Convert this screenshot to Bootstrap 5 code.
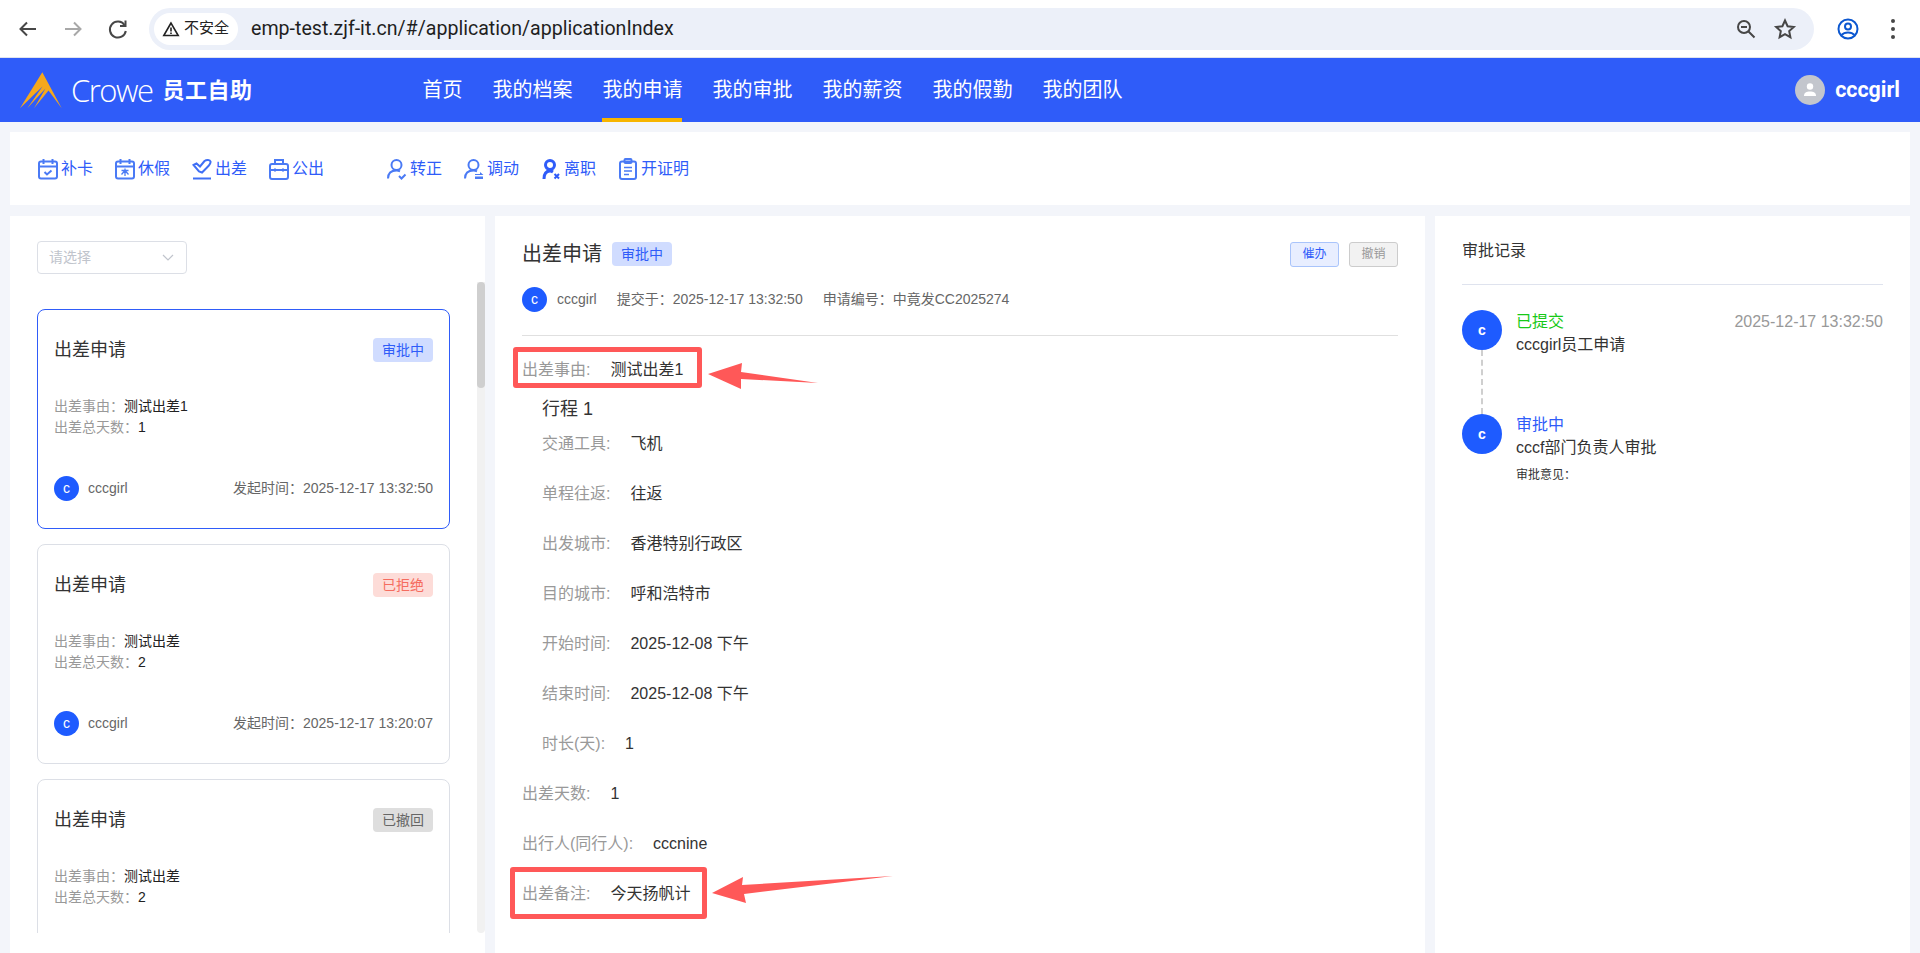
<!doctype html>
<html lang="zh-CN"><head><meta charset="utf-8"><title>员工自助</title>
<link href="https://cdn.jsdelivr.net/npm/bootstrap@5.3.0/dist/css/bootstrap.min.css" rel="stylesheet">
<style>
html,body{height:953px;overflow:hidden}
body{background:#f3f5fa;font-family:"Liberation Sans","Noto Sans CJK SC",sans-serif;color:#333;position:relative}
.chromebar{height:58px;background:#fff;padding:0 0 0 14px;border-bottom:1px solid #dfe3ee}
.cicon{width:28px;height:28px;flex:none}
.cicons{gap:17px;margin-right:17px}
.omni{height:42px;width:1665px;background:#ecf0f9;border-radius:21px;padding:0 15px 0 5px}
.chip{height:32px;width:84px;background:#fff;border-radius:16px;font-size:15px;color:#222;gap:4px;padding-left:8px;white-space:nowrap}
.urltext{font-family:Roboto,sans-serif;font-size:19.6px;color:#1f1f1f;margin-left:13px}
.endicons{gap:11px}
.profileicons{gap:27px;margin-left:20px}
.topnav{height:64px;background:#2f5cf9;padding:0 20px;color:#fff}
.brandword{font-family:"Open Sans",sans-serif;font-size:31px;letter-spacing:-1.5px;font-weight:300;margin:0 10px 0 9px}
.brandcn{font-size:22px;font-weight:700;letter-spacing:.5px}
.menuwrap{gap:30px;margin-left:170px;height:64px}
.menuitem{font-size:20px;line-height:64px;color:#fff;text-decoration:none;height:64px;display:block}
.menuitem.on{border-bottom:4px solid #f7b500}
.useravatar{width:30px;height:30px;border-radius:50%;background:#c3c6cd;margin-right:10px}
.username{font-family:Roboto,sans-serif;font-size:21.4px;font-weight:700}
.toolbar{height:73px;margin:10px 10px 11px;background:#fff;padding:0 28px}
.tool{font-size:16px;color:#2f5cf9;gap:3px;line-height:22px;text-decoration:none}
.toolgroup{gap:22px}
.toolgroup+.toolgroup{margin-left:63px}
.tool svg{width:20px;height:22px;flex:none}
.panels{gap:10px;padding:0 10px;height:737px}
.panel{background:#fff;height:737px}
.panel-left{width:475px;position:relative}
.fake-select{width:150px;height:33px;border:1px solid #dcdfe6;border-radius:4px;font-size:14px;color:#c0c4cc;padding:0 12px 0 11px;margin:25px 0 8px 27px}
.listscroll{height:651px;overflow:hidden;display:flex;justify-content:space-between;padding-left:27px}
.cards{width:413px;margin-top:27px}
.apcard{height:220px;border:1px solid #dcdfe6;border-radius:8px;padding:28px 16px 0;margin-bottom:15px}
.apcard.sel{border-color:#2f5cf9}
.ctitle{font-size:18px;color:#333;line-height:24px}
.state{font-size:14px;width:60px;height:24px;border-radius:4px;line-height:24px;text-align:center}
.st-blue{background:#d0dcff;color:#2f5cf9}
.st-red{background:#fddcd8;color:#f56c5f}
.st-gray{background:#dedede;color:#666}
.cfields{font-size:14px;line-height:21px;margin-top:34px;height:80px;color:#222}
.lab{color:#999}
.cfoot{font-size:14px;color:#666}
.dot{width:25px;height:25px;border-radius:50%;background:#1e5bff;color:#fff;font-size:14px;line-height:25px;text-align:center;flex:none}
.dotname{margin-left:9px}
.track{width:8px;background:#f1f1f1;height:651px;border-radius:0 0 4px 4px}
.thumb{height:106px;width:8px;background:#cfcfcf;border-radius:4px}
.panel-mid{width:930px;padding:25px 27px 0 27px}
.mtitle{font-size:20px;line-height:26px;color:#333}
.mtitle .state{margin-left:10px}
.mini{width:49px;height:25px;border-radius:3px;font-size:12px;line-height:23px;text-align:center}
.mini-a{background:#e8eeff;border:1px solid #a9c4fb;color:#2f5cf9}
.mini-b{background:#f2f2f2;border:1px solid #ccc;color:#999;margin-left:10px}
.msub{font-size:14px;color:#666;margin-top:20px;padding-bottom:23px;border-bottom:1px solid #e0e0e0}
.msub .dot{margin-right:10px}
.msub .gapl{margin-left:20px}
.frow{font-size:16px;height:50px;line-height:50px;color:#333;white-space:nowrap}
.frow .lab{margin-right:20px}
.frow.first{margin-top:9px;height:50px}
.trip{padding-left:20px}
.triptitle{font-size:18px;line-height:26px;margin-top:1px;height:23px;color:#333}
.panel-right{width:475px;padding:0 27px}
.rtitle{font-size:16px;line-height:20px;padding:25px 0 23px;border-bottom:1px solid #dfe3ee;color:#333}
.tl{margin-top:25px;position:relative}
.tlitem{height:104px}
.tlavatar{width:40px;height:40px;border-radius:50%;background:#1e5bff;color:#fff;font-size:14px;font-weight:700;line-height:40px;text-align:center;flex:none;margin-right:14px}
.tlbody{font-size:16px;line-height:23px;color:#333}
.tlbody.lift{margin-top:-1px}
.tlhead{display:flex;justify-content:space-between}
.tdate{color:#999;font-size:16px}
.tstatus-g{color:#17c917}
.tstatus-b{color:#2f5cf9}
.opinion{font-size:12px;line-height:16px;margin-top:8px;color:#333}
.tlline{position:absolute;left:19px;top:40px;height:64px;width:0;border-left:2px dashed #cfcfcf}
.redbox{position:absolute;border:5px solid #ff5858;border-radius:3px}
.rb1{left:513px;top:347px;width:189px;height:41px}
.rb2{left:510px;top:867px;width:197px;height:52px}
.arrows{position:absolute;left:0;top:0;width:1920px;height:953px;pointer-events:none}
</style></head>
<body>
<div class="chromebar d-flex align-items-center">
  <div class="d-flex align-items-center cicons">
    <svg class="cicon" viewBox="0 0 28 28" fill="none" stroke="#474747" stroke-width="2"><path d="M22 14H7M13 7.500L6.500 14l6.500 6.500"/></svg>
    <svg class="cicon" viewBox="0 0 28 28" fill="none" stroke="#a8a8a8" stroke-width="2"><path d="M6 14h15M15 7.500l6.500 6.500-6.500 6.500"/></svg>
    <svg class="cicon" viewBox="0 0 28 28" fill="none" stroke="#474747" stroke-width="2"><path d="M20.500 10a8 8 0 1 0 1.300 6"/><path d="M21.500 5.500v5.500h-5.500"/></svg>
  </div>
  <div class="omni d-flex align-items-center justify-content-between">
    <div class="d-flex align-items-center">
      <div class="chip d-flex align-items-center"><svg width="18" height="16" viewBox="0 0 18 16" fill="none" stroke="#222" stroke-width="1.600"><path d="M9 2L1.800 14.500h14.400z"/><path d="M9 6.500v4M9 11.500v1.500"/></svg><span>不安全</span></div>
      <span class="urltext">emp-test.zjf-it.cn/#/application/applicationIndex</span>
    </div>
    <div class="d-flex align-items-center endicons">
      <svg class="cicon" viewBox="0 0 28 28" fill="none" stroke="#474747" stroke-width="2"><circle cx="12" cy="12" r="6"/><path d="M9 12h6M16.500 16.500l6 6"/></svg>
      <svg class="cicon" viewBox="0 0 28 28" fill="none" stroke="#474747" stroke-width="2"><path d="M14 5.500l2.600 5.700 6.200.7-4.600 4.200 1.200 6.100-5.400-3.100-5.400 3.100 1.200-6.100-4.600-4.200 6.200-.7z"/></svg>
    </div>
  </div>
  <div class="d-flex align-items-center profileicons">
    <svg class="cicon" viewBox="0 0 28 28" fill="none" stroke="#0b57d0" stroke-width="2"><circle cx="14" cy="14" r="9.500"/><circle cx="14" cy="11.500" r="3"/><path d="M7.500 20c3-3.500 10-3.500 13 0"/></svg>
    <svg width="8" height="24" viewBox="0 0 8 24" fill="#474747"><circle cx="4" cy="4" r="2"/><circle cx="4" cy="12" r="2"/><circle cx="4" cy="20" r="2"/></svg>
  </div>
</div>

<div class="topnav d-flex align-items-center">
  <svg width="42" height="40" viewBox="0 0 42 40"><polygon fill="#f5a81c" points="22.300,2.300 41.700,38.300 28.500,20.500 14,38.300 25.500,18.500 7.300,38.300 22.500,16.500 0,38.300"/></svg>
  <span class="brandword">Crowe</span><span class="brandcn">员工自助</span>
  <nav class="d-flex menuwrap">
    <a class="menuitem" href="#">首页</a><a class="menuitem" href="#">我的档案</a><a class="menuitem on" href="#">我的申请</a><a class="menuitem" href="#">我的审批</a><a class="menuitem" href="#">我的薪资</a><a class="menuitem" href="#">我的假勤</a><a class="menuitem" href="#">我的团队</a>
  </nav>
  <div class="ms-auto d-flex align-items-center">
    <div class="useravatar d-flex align-items-center justify-content-center"><svg width="18" height="18" viewBox="0 0 18 18" fill="#fff"><circle cx="9" cy="5.500" r="3.200"/><path d="M3 15c0-3.500 2.500-4.500 6-4.500s6 1 6 4.500z"/></svg></div>
    <span class="username">cccgirl</span>
  </div>
</div>

<div class="toolbar d-flex align-items-center">
  <div class="d-flex toolgroup">
    <a class="tool d-flex align-items-center" href="#"><svg viewBox="0 0 20 22" fill="none" stroke="#4a7af5" stroke-width="2"><rect x="1" y="3.500" width="18" height="17" rx="2"/><path d="M1 8.500h18M5.500 1v5M14.500 1v5M6.500 14l2.500 2.500 4.500-4"/></svg>补卡</a>
    <a class="tool d-flex align-items-center" href="#"><svg viewBox="0 0 20 22" fill="none" stroke="#4a7af5" stroke-width="2"><rect x="1" y="3.500" width="18" height="17" rx="2"/><path d="M1 8.500h18M5.500 1v5M14.500 1v5"/><path stroke-width="1.300" d="M6.500 12.500h7M10 10.500v7.500M10 12.500l-3.500 4M10 12.500l3.500 4"/></svg>休假</a>
    <a class="tool d-flex align-items-center" href="#"><svg viewBox="0 0 20 22" fill="none" stroke="#3f6ff5" stroke-width="2"><path d="M1.500 7l3-1.500 3.500 3L12.500 3c2-1.500 5.500-1.500 6 .5s-2 4.500-3.500 6l-5 5-3-1z"/><path d="M1 20.500h18"/></svg>出差</a>
    <a class="tool d-flex align-items-center" href="#"><svg viewBox="0 0 20 22" fill="none" stroke="#4a7af5" stroke-width="2"><rect x="1" y="6" width="18" height="15" rx="2"/><path d="M6 6V2h8v4M1 12h18M6 10.500v3M14 10.500v3"/></svg>公出</a>
  </div>
  <div class="d-flex toolgroup">
    <a class="tool d-flex align-items-center" href="#"><svg viewBox="0 0 20 22" fill="none" stroke="#4a7af5" stroke-width="2"><circle cx="9.500" cy="7" r="5"/><path d="M1 20.500c0-5 3-8 8.500-8 1.500 0 2.500.3 3.500.8M12 18l2.500 2.500 4-4"/></svg>转正</a>
    <a class="tool d-flex align-items-center" href="#"><svg viewBox="0 0 20 22" fill="none" stroke="#4a7af5" stroke-width="2"><circle cx="9.500" cy="7" r="5"/><path d="M1 20.500c0-5 3-8 8.500-8 1.500 0 2.500.3 3.500.8"/><path fill="#4a7af5" stroke="none" d="M11 16h5v-2l3.500 3H11zM11 18.500h8V21h-8z"/></svg>调动</a>
    <a class="tool d-flex align-items-center" href="#"><svg viewBox="0 0 20 22" fill="none" stroke="#2f5cf9" stroke-width="3"><circle cx="9" cy="7" r="4.500"/><path d="M3 21c0-4 1.500-8 6-8 1.500 0 2 .3 3 1"/><path d="M13.500 16l4.500 4.500M18 16l-4.500 4.500" stroke-width="2"/></svg>离职</a>
    <a class="tool d-flex align-items-center" href="#"><svg viewBox="0 0 20 22" fill="none" stroke="#4a7af5" stroke-width="2"><rect x="2" y="3.500" width="16" height="17.500" rx="2"/><rect x="6.500" y="1" width="7" height="4" rx="1"/><path stroke-width="1.500" d="M6 9.500h8M6 13h8M6 16.500h5"/></svg>开证明</a>
  </div>
</div>

<div class="panels d-flex">
  <section class="panel panel-left">
    <div class="fake-select d-flex align-items-center justify-content-between"><span>请选择</span><svg width="12" height="7" viewBox="0 0 12 7" fill="none" stroke="#c0c4cc" stroke-width="1.200"><path d="M1 1l5 5 5-5"/></svg></div>
    <div class="listscroll">
      <div class="cards">
        <div class="apcard sel">
          <div class="d-flex justify-content-between align-items-center"><span class="ctitle">出差申请</span><span class="state st-blue">审批中</span></div>
          <div class="cfields"><div><span class="lab">出差事由：</span>测试出差1</div><div><span class="lab">出差总天数：</span>1</div></div>
          <div class="cfoot d-flex align-items-center justify-content-between"><div class="d-flex align-items-center"><span class="dot">c</span><span class="dotname">cccgirl</span></div><span>发起时间：2025-12-17 13:32:50</span></div>
        </div>
        <div class="apcard">
          <div class="d-flex justify-content-between align-items-center"><span class="ctitle">出差申请</span><span class="state st-red">已拒绝</span></div>
          <div class="cfields"><div><span class="lab">出差事由：</span>测试出差</div><div><span class="lab">出差总天数：</span>2</div></div>
          <div class="cfoot d-flex align-items-center justify-content-between"><div class="d-flex align-items-center"><span class="dot">c</span><span class="dotname">cccgirl</span></div><span>发起时间：2025-12-17 13:20:07</span></div>
        </div>
        <div class="apcard">
          <div class="d-flex justify-content-between align-items-center"><span class="ctitle">出差申请</span><span class="state st-gray">已撤回</span></div>
          <div class="cfields"><div><span class="lab">出差事由：</span>测试出差</div><div><span class="lab">出差总天数：</span>2</div></div>
        </div>
      </div>
      <div class="track"><div class="thumb"></div></div>
    </div>
  </section>

  <section class="panel panel-mid">
    <div class="d-flex justify-content-between align-items-center">
      <div class="mtitle d-flex align-items-center"><span>出差申请</span><span class="state st-blue">审批中</span></div>
      <div class="d-flex"><span class="mini mini-a">催办</span><span class="mini mini-b">撤销</span></div>
    </div>
    <div class="msub d-flex align-items-center"><span class="dot">c</span><span>cccgirl</span><span class="gapl">提交于：2025-12-17 13:32:50</span><span class="gapl">申请编号：中竟发CC2025274</span></div>
    <div class="frow first"><span class="lab">出差事由:</span>测试出差1</div>
    <div class="trip">
      <div class="triptitle">行程 1</div>
      <div class="frow"><span class="lab">交通工具:</span>飞机</div>
      <div class="frow"><span class="lab">单程往返:</span>往返</div>
      <div class="frow"><span class="lab">出发城市:</span>香港特别行政区</div>
      <div class="frow"><span class="lab">目的城市:</span>呼和浩特市</div>
      <div class="frow"><span class="lab">开始时间:</span>2025-12-08 下午</div>
      <div class="frow"><span class="lab">结束时间:</span>2025-12-08 下午</div>
      <div class="frow"><span class="lab">时长(天):</span>1</div>
    </div>
    <div class="frow"><span class="lab">出差天数:</span>1</div>
    <div class="frow"><span class="lab">出行人(同行人):</span>cccnine</div>
    <div class="frow"><span class="lab">出差备注:</span>今天扬帆计</div>
  </section>

  <section class="panel panel-right">
    <div class="rtitle">审批记录</div>
    <div class="tl">
      <div class="tlline"></div>
      <div class="tlitem d-flex">
        <div class="tlavatar">c</div>
        <div class="tlbody flex-grow-1"><div class="tlhead"><span class="tstatus-g">已提交</span><span class="tdate">2025-12-17 13:32:50</span></div><div>cccgirl员工申请</div></div>
      </div>
      <div class="tlitem d-flex">
        <div class="tlavatar">c</div>
        <div class="tlbody lift flex-grow-1"><div class="tlhead"><span class="tstatus-b">审批中</span></div><div>cccf部门负责人审批</div><div class="opinion">审批意见：</div></div>
      </div>
    </div>
  </section>
</div>

<div class="redbox rb1"></div>
<div class="redbox rb2"></div>
<svg class="arrows" viewBox="0 0 1920 953"><polygon fill="#ff5858" points="708,374 742,363 741,372 818,383 741,379 741,389"/><polygon fill="#ff5858" points="712,893 743,877 742,885 893,876 744,894 746,903"/></svg>
</body></html>
